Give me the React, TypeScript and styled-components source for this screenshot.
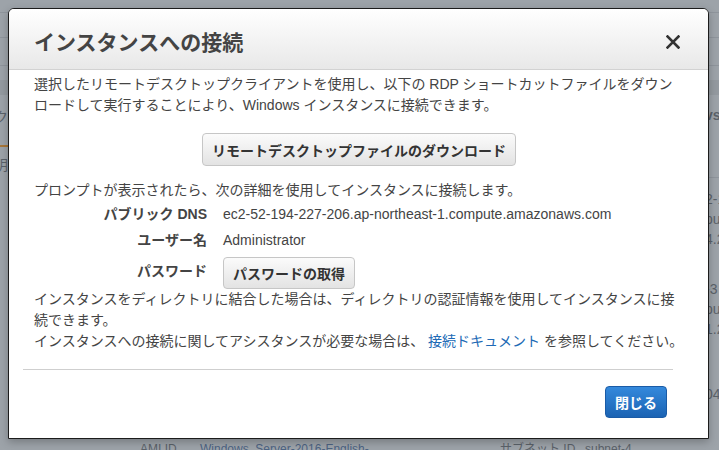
import React from 'react'
import styled, { createGlobalStyle } from 'styled-components'

const GlobalStyle = createGlobalStyle`
  html, body {
    margin: 0;
    padding: 0;
  }

  body {
    font-family: "Liberation Sans", "Noto Sans CJK JP", sans-serif;
    font-size: 14px;
    color: #444;
  }
`

const Screen = styled.div`
  position: relative;
  width: 719px;
  height: 450px;
  overflow: hidden;
  background: #9da3a9;
`

/* dimmed console page behind the dialog */

const Console = styled.div`
  display: flex;
  flex-direction: column;
  height: 100%;
  color: #5b626a;
  font-size: 14px;
  line-height: 20px;
`

const ConsoleBar = styled.div<{ $height: number }>`
  flex-shrink: 0;
  height: ${(p) => p.$height}px;
  border-bottom: 1px solid #8f959c;
`

const ConsoleBand = styled.div`
  flex-shrink: 0;
  margin-top: 14px;
  height: 15px;
  background: #949aa0;
`

const ConsoleBody = styled.div`
  flex: 1;
  display: flex;
  min-height: 0;
`

const SidePane = styled.div`
  width: 8px;
  overflow: hidden;
  display: flex;
  flex-direction: column;
  align-items: flex-end;
  padding-top: 12px;
  white-space: nowrap;
`

const SideTab = styled.div<{ $active?: boolean }>`
  padding-bottom: 18px;
  border-bottom: 2px solid ${(p) => (p.$active ? '#a8773a' : 'transparent')};
`

const SideText = styled.div`
  margin-top: 8px;
`

const Spacer = styled.div`
  flex: 1;
`

const DetailPane = styled.div`
  width: 14px;
  overflow: hidden;
  padding-top: 10px;
  white-space: nowrap;
`

const DetailHeading = styled.div`
  font-weight: bold;
`

const DetailRule = styled.div`
  margin-top: 52px;
  border-top: 1px solid #8f959c;
`

const DetailGroup = styled.div<{ $gap: number }>`
  margin-top: ${(p) => p.$gap}px;
`

const ConsoleFooter = styled.div`
  flex-shrink: 0;
  display: grid;
  grid-template-columns: 60px 300px 85px 1fr;
  padding-left: 140px;
  height: 11px;
  font-size: 12px;
  line-height: 20px;
  white-space: nowrap;
  overflow: hidden;
`

const ConsoleLink = styled.span`
  color: #4d6484;
  text-decoration: underline;
`

/* dialog */

const Dialog = styled.div`
  position: absolute;
  top: 8px;
  left: 8px;
  width: 701px;
  box-sizing: border-box;
  background: #fff;
  border: 1px solid #1c1c1c;
  border-radius: 6px 6px 0 0;
  box-shadow: 0 3px 9px rgba(0, 0, 0, 0.25);
  overflow: hidden;
`

const DialogHeader = styled.div`
  display: flex;
  align-items: center;
  justify-content: space-between;
  height: 60px;
  padding: 0 28px 0 25px;
  background: linear-gradient(#ffffff, #e8e8e8);
  border-bottom: 1px solid #d2d2d2;
`

const Title = styled.h4`
  margin: 3px 0 0;
  font-size: 21px;
  font-weight: bold;
  color: #444;
`

const CloseButton = styled.button`
  display: flex;
  margin: 6px 0 0;
  padding: 0;
  border: 0;
  background: none;
  cursor: pointer;
`

const DialogBody = styled.div`
  padding: 4px 24px 0 25px;
  line-height: 21px;
`

const Text = styled.p`
  margin: 0;
`

const Centered = styled.div`
  display: flex;
  justify-content: center;
  margin: 17px 0 14px;
`

const Button = styled.button<{ $height: number }>`
  height: ${(p) => p.$height}px;
  padding: 0 9px;
  font-family: "Liberation Sans", "Noto Sans CJK JP", sans-serif;
  font-size: 14px;
  font-weight: bold;
  color: #333;
  background: linear-gradient(#fbfbfb, #e3e3e3);
  border: 1px solid #c6c6c6;
  border-radius: 4px;
  cursor: pointer;
`

const PrimaryButton = styled(Button)`
  color: #fff;
  background: linear-gradient(#3489dc, #1b63b3);
  border-color: #1a5ba6;
`

const DetailGrid = styled.dl`
  display: grid;
  grid-template-columns: 173px 1fr;
  grid-template-rows: 26px 26px 36px;
  column-gap: 16px;
  align-items: center;
  margin: 0;
`

const Label = styled.dt`
  text-align: right;
  font-weight: bold;
`

const Value = styled.dd`
  margin: 0;

  ${Button} {
    margin-top: 4px;
  }
`

const Link = styled.a`
  color: #2069b5;
  text-decoration: none;
`

const DialogFooter = styled.div`
  display: flex;
  justify-content: flex-end;
  margin: 17px 35px 0 14px;
  padding: 16px 6px 20px;
  border-top: 1px solid #cfcfcf;
`

const CloseIcon = () => (
  <svg width="14" height="14" viewBox="0 0 14 14">
    <path
      d="M1.5 1.5 L12.5 12.5 M12.5 1.5 L1.5 12.5"
      stroke="#333"
      strokeWidth="2.6"
      strokeLinecap="square"
    />
  </svg>
)

const App: React.FC = () => {
  return (
    <>
      <GlobalStyle />
      <Screen>
        <Console>
          <ConsoleBar $height={12} />
          <ConsoleBar $height={24} />
          <ConsoleBar $height={27} />
          <ConsoleBand />
          <ConsoleBody>
            <SidePane>
              <SideTab $active>ステータスチェック</SideTab>
              <SideText>説明</SideText>
            </SidePane>
            <Spacer />
            <DetailPane>
              <DetailHeading>vs</DetailHeading>
              <DetailRule />
              <DetailGroup $gap={11}>
                <div>2-1</div>
                <div>pu</div>
                <div>4.2</div>
              </DetailGroup>
              <DetailGroup $gap={30}>
                <div>-3</div>
                <div>pu</div>
                <div>1.2</div>
              </DetailGroup>
              <DetailGroup $gap={45}>
                <div>04</div>
              </DetailGroup>
            </DetailPane>
          </ConsoleBody>
          <ConsoleFooter>
            <span>AMI ID</span>
            <ConsoleLink>Windows_Server-2016-English-</ConsoleLink>
            <span>サブネット ID</span>
            <span>subnet-4</span>
          </ConsoleFooter>
        </Console>

        <Dialog role="dialog">
          <DialogHeader>
            <Title>インスタンスへの接続</Title>
            <CloseButton aria-label="閉じる">
              <CloseIcon />
            </CloseButton>
          </DialogHeader>

          <DialogBody>
            <Text>
              選択したリモートデスクトップクライアントを使用し、以下の RDP ショートカットファイルをダウン
              <br />
              ロードして実行することにより、Windows インスタンスに接続できます。
            </Text>

            <Centered>
              <Button $height={33}>リモートデスクトップファイルのダウンロード</Button>
            </Centered>

            <Text>プロンプトが表示されたら、次の詳細を使用してインスタンスに接続します。</Text>

            <DetailGrid>
              <Label>パブリック DNS</Label>
              <Value>ec2-52-194-227-206.ap-northeast-1.compute.amazonaws.com</Value>
              <Label>ユーザー名</Label>
              <Value>Administrator</Value>
              <Label>パスワード</Label>
              <Value>
                <Button $height={32}>パスワードの取得</Button>
              </Value>
            </DetailGrid>

            <Text>
              インスタンスをディレクトリに結合した場合は、ディレクトリの認証情報を使用してインスタンスに接
              <br />
              続できます。
              <br />
              インスタンスへの接続に関してアシスタンスが必要な場合は、{' '}
              <Link href="#">接続ドキュメント</Link> を参照してください。
            </Text>
          </DialogBody>

          <DialogFooter>
            <PrimaryButton $height={32}>閉じる</PrimaryButton>
          </DialogFooter>
        </Dialog>
      </Screen>
    </>
  )
}

export default App
